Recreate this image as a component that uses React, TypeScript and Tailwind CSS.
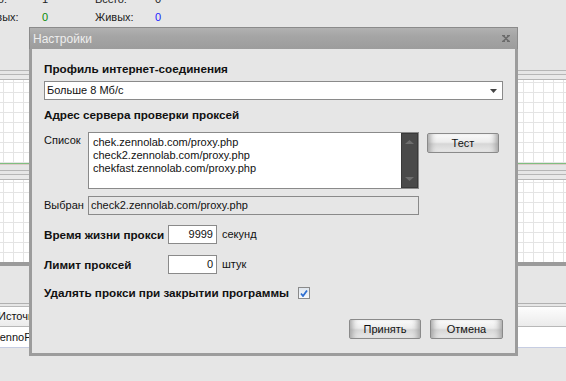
import React from "react";

const sans = "font-['Liberation_Sans',Arial,sans-serif]";

const grid =
  "bg-white bg-[linear-gradient(#e4e4e4_1px,transparent_1px),linear-gradient(90deg,#e4e4e4_1px,transparent_1px)] bg-[size:10px_10px] bg-[position:3px_2px]";

const btn =
  "flex items-center justify-center h-[20px] rounded-[2px] border border-[#8a8a8a] text-[11px] text-[#111] bg-[linear-gradient(#fbfbfb,#ececec_45%,#d6d6d6_55%,#e9e9e9)] shadow-[inset_7px_0_6px_-5px_#9a9a9a,inset_-7px_0_6px_-5px_#9a9a9a]";

const bold = "text-[11.7px] font-bold";

const Background = () => (
  <div className="flex flex-col">
    <div className="h-[70px]">
      <div className="-mt-[10px] grid grid-cols-[72px_53px_60px_20px] -ml-[30px] text-[11px] leading-[18px] text-[#222]">
        <span>Готово:</span>
        <span>1</span>
        <span>Всего:</span>
        <span>0</span>
        <span>Мертвых:</span>
        <span className="text-[#0a8a0a]">0</span>
        <span>Живых:</span>
        <span className="text-[#1a1aff]">0</span>
      </div>
    </div>
    <div className="h-[4px] border-t border-[#b6b6b6]" />
    <div className="h-[6px] border-y border-[#b6b6b6] bg-[#e9e9e9]" />
    <div className={`h-[83px] ${grid}`} />
    <div className="h-px bg-[#7fbf7f]" />
    <div className="h-px bg-[#dcc9c9]" />
    <div className="h-[5px]" />
    <div className="h-[4px] border-t border-[#b6b6b6]" />
    <div className="h-[6px] border-y border-[#b6b6b6] bg-[#e9e9e9]" />
    <div className={`h-[82px] ${grid}`} />
    <div className="h-[4px] bg-[#9b9b9b]" />
    <div className="h-[37px]" />
    <div className="h-[3px] border-t border-[#b0b0b0]" />
    <div className="h-[21px] border-t border-b border-[#b8b8b8] bg-[linear-gradient(#fdfdfd,#ebebeb)] flex items-center -ml-[2px] text-[11px] text-[#111]">
      Источник
    </div>
    <div className="h-[21px] bg-white border-b border-[#c6cde2] flex items-center -ml-[7px] text-[11px] text-[#111]">
      ZennoPoster
    </div>
    <div className="flex-1 bg-[#f3f3f3]" />
  </div>
);

const NumField = ({ value }: { value: string }) => (
  <div className="w-[49px] h-[19px] border border-[#8a8a8a] bg-white flex items-center justify-end pr-[3px] text-[11px]">
    {value}
  </div>
);

const Dialog = () => (
  <div className="absolute left-[29px] top-[27px] w-[489px] h-[329px] flex flex-col">
    <div className="h-[22px] border border-b-0 border-[#8b8b8b] bg-[linear-gradient(#b1b1b1,#a5a5a5_40%,#9c9c9c)] flex items-center justify-between pl-[3px] pr-[7px]">
      <span className="text-[12px] text-[#eeeeee]">Настройки</span>
      <svg width="8" height="7" viewBox="0 0 8 7">
        <path d="M1 0.5 L7 6.5 M7 0.5 L1 6.5 M0 0.5 H3 M5 0.5 H8 M0 6.5 H3 M5 6.5 H8" stroke="#6b6b6b" strokeWidth="1.6" />
      </svg>
    </div>
    <div className="flex-1 flex flex-col bg-[#e6e6e6] border-[3px] border-t-0 border-[#9c9c9c] px-[12px] text-[#111]">
      <div className={`mt-[13px] leading-[14px] ${bold}`}>Профиль интернет-соединения</div>
      <div className="mt-[5px] h-[19px] border border-[#8a8a8a] bg-white flex items-center justify-between pl-[2px] pr-[5px] text-[11px]">
        <span>Больше 8 Мб/с</span>
        <svg width="7" height="4" viewBox="0 0 7 4">
          <path d="M0 0 H7 L3.5 4 Z" fill="#444" />
        </svg>
      </div>
      <div className={`mt-[8px] leading-[14px] ${bold}`}>Адрес сервера проверки проксей</div>

      <div className="mt-[10px] flex items-start text-[11px]">
        <span className="w-[44px] pt-[2px] leading-[13px]">Список</span>
        <div className="w-[331px] h-[57px] border border-[#8a8a8a] bg-white flex">
          <div className="flex-1 pl-[4px] pt-[3px] leading-[13px]">
            <div>chek.zennolab.com/proxy.php</div>
            <div>check2.zennolab.com/proxy.php</div>
            <div>chekfast.zennolab.com/proxy.php</div>
          </div>
          <div className="w-[17px] bg-[#4a4a4a] border border-[#3a3a3a] flex flex-col items-center justify-between py-[6px]">
            <svg width="9" height="4" viewBox="0 0 9 4">
              <path d="M0 4 L4.5 0 L9 4 Z" fill="#6e6e6e" />
            </svg>
            <svg width="9" height="4" viewBox="0 0 9 4">
              <path d="M0 0 L9 0 L4.5 4 Z" fill="#6e6e6e" />
            </svg>
          </div>
        </div>
        <div className={`ml-[8px] mt-px w-[72px] ${btn}`}>Тест</div>
      </div>

      <div className="mt-[7px] flex items-center text-[11px]">
        <span className="w-[44px]">Выбран</span>
        <div className="w-[331px] h-[19px] border border-[#8a8a8a] bg-[#e6e6e6] flex items-center pl-[2px]">
          check2.zennolab.com/proxy.php
        </div>
      </div>

      <div className="mt-[10px] flex items-center">
        <span className={`w-[124px] ${bold}`}>Время жизни прокси</span>
        <NumField value="9999" />
        <span className="ml-[5px] text-[11px]">секунд</span>
      </div>
      <div className="mt-[11px] flex items-center">
        <span className={`w-[124px] ${bold}`}>Лимит проксей</span>
        <NumField value="0" />
        <span className="ml-[5px] text-[11px]">штук</span>
      </div>

      <div className="mt-[12px] h-[14px] flex items-center">
        <span className={`${bold} leading-[14px]`}>Удалять прокси при закрытии программы</span>
        <div className="ml-[9px] w-[12px] h-[12px] border border-[#8a8a8a] bg-[linear-gradient(#dfe6ee,#f6f8fb)] flex items-center justify-center">
          <svg width="8" height="7" viewBox="0 0 8 7">
            <path d="M1 3.5 L3 6 L7 0.5" fill="none" stroke="#2f6fd1" strokeWidth="1.8" />
          </svg>
        </div>
      </div>

      <div className="mt-[19px] flex justify-end gap-[9px]">
        <div className={`w-[72px] ${btn}`}>Принять</div>
        <div className={`w-[73px] ${btn}`}>Отмена</div>
      </div>
    </div>
  </div>
);

export default function App() {
  return (
    <div className={`relative w-[566px] h-[381px] overflow-hidden bg-[#e6e6e6] ${sans}`}>
      <Background />
      <Dialog />
    </div>
  );
}
